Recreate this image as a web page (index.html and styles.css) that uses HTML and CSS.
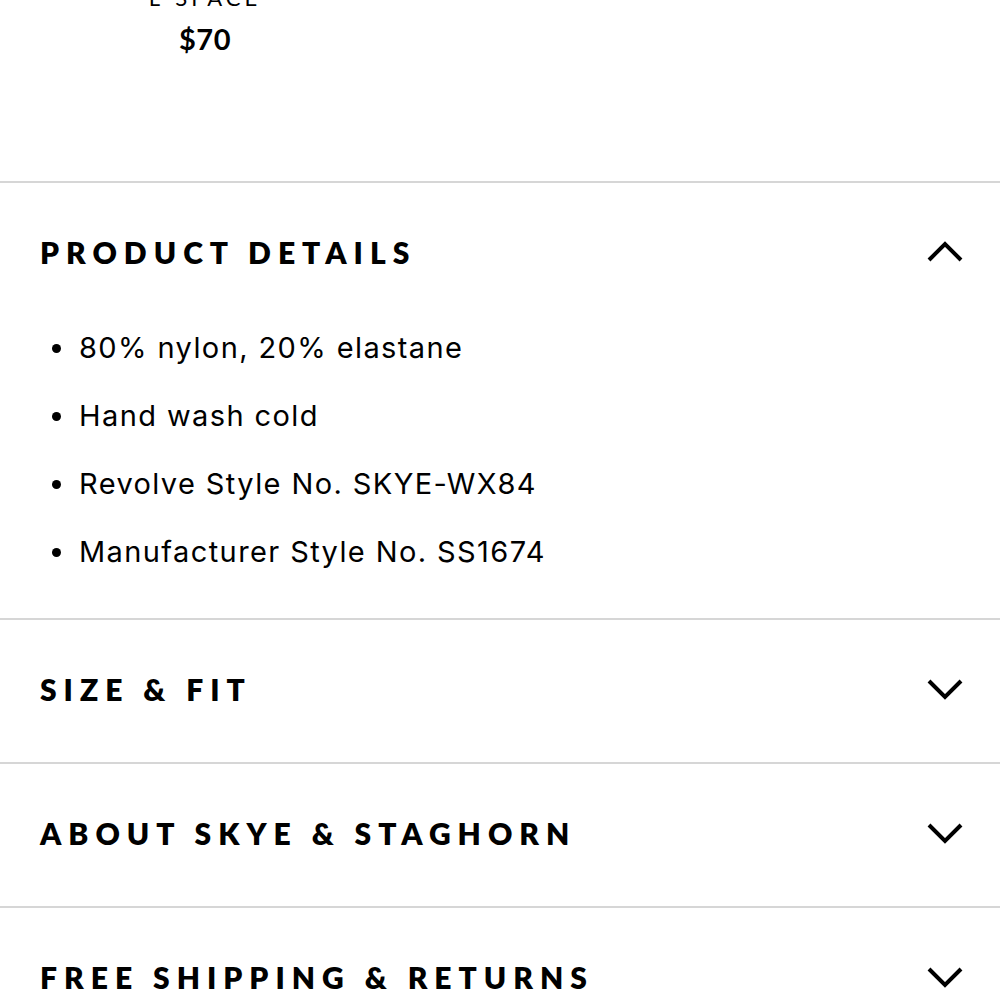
FILE: index.html
```html
<!DOCTYPE html>
<html>
<head>
<meta charset="utf-8">
<link rel="stylesheet" href="styles.css">
</head>
<body>
<div class="recs">
  <div class="card">
    <div class="brand">L*SPACE</div>
    <div class="price">$70</div>
  </div>
</div>

<section class="acc open">
  <div class="acc-head">
    <h2>PRODUCT DETAILS</h2>
    <svg class="chev" width="36" height="22" viewBox="0 0 36 22"><path d="M2 19 L18 3 L34 19" fill="none" stroke="#000" stroke-width="4"/></svg>
  </div>
  <ul class="details">
    <li>80% nylon, 20% elastane</li>
    <li>Hand wash cold</li>
    <li>Revolve Style No. SKYE-WX84</li>
    <li>Manufacturer Style No. SS1674</li>
  </ul>
</section>
<section class="acc">
  <div class="acc-head">
    <h2>SIZE &amp; FIT</h2>
    <svg class="chev" width="36" height="22" viewBox="0 0 36 22"><path d="M2 3 L18 19 L34 3" fill="none" stroke="#000" stroke-width="4"/></svg>
  </div>
</section>
<section class="acc">
  <div class="acc-head">
    <h2>ABOUT SKYE &amp; STAGHORN</h2>
    <svg class="chev" width="36" height="22" viewBox="0 0 36 22"><path d="M2 3 L18 19 L34 3" fill="none" stroke="#000" stroke-width="4"/></svg>
  </div>
</section>
<section class="acc">
  <div class="acc-head">
    <h2>FREE SHIPPING &amp; RETURNS</h2>
    <svg class="chev" width="36" height="22" viewBox="0 0 36 22"><path d="M2 3 L18 19 L34 3" fill="none" stroke="#000" stroke-width="4"/></svg>
  </div>
</section>
</body>
</html>
```

FILE: styles.css
```css
html, body {
  margin: 0;
  padding: 0;
  background: #fff;
  color: #000;
}
body {
  font-family: "Lato", "Liberation Sans", sans-serif;
  overflow: hidden;
}
.recs {
  height: 181px;
  display: flex;
  padding-left: 40px;
}
.card {
  width: 330px;
  text-align: center;
}
.brand {
  margin-top: -15px;
  font-size: 22px;
  line-height: 26px;
  letter-spacing: 4px;
  font-weight: 400;
  white-space: nowrap;
}
.price {
  margin-top: 10px;
  font-size: 29px;
  line-height: 36px;
  font-weight: 700;
  letter-spacing: 0.5px;
}
.acc {
  border-top: 2px solid #d6d6d6;
}
.acc-head {
  height: 142px;
  display: flex;
  align-items: center;
  justify-content: space-between;
  padding: 0 37px 0 40px;
}
.acc-head h2 {
  margin: 0 0 4px;
  font-size: 30px;
  font-weight: 800;
  letter-spacing: 7px;
}
.chev {
  display: block;
  margin-bottom: 4px;
}
.details {
  list-style: none;
  margin: 0;
  padding: 0 0 21px 79px;
  font-family: "Inter", "Open Sans", sans-serif;
  font-size: 29px;
  letter-spacing: 1.4px;
}
.details li {
  position: relative;
  line-height: 46px;
  margin-bottom: 22px;
}
.details li::before {
  content: "";
  position: absolute;
  left: -27px;
  top: 19px;
  width: 9px;
  height: 9px;
  border-radius: 50%;
  background: #000;
}
```
